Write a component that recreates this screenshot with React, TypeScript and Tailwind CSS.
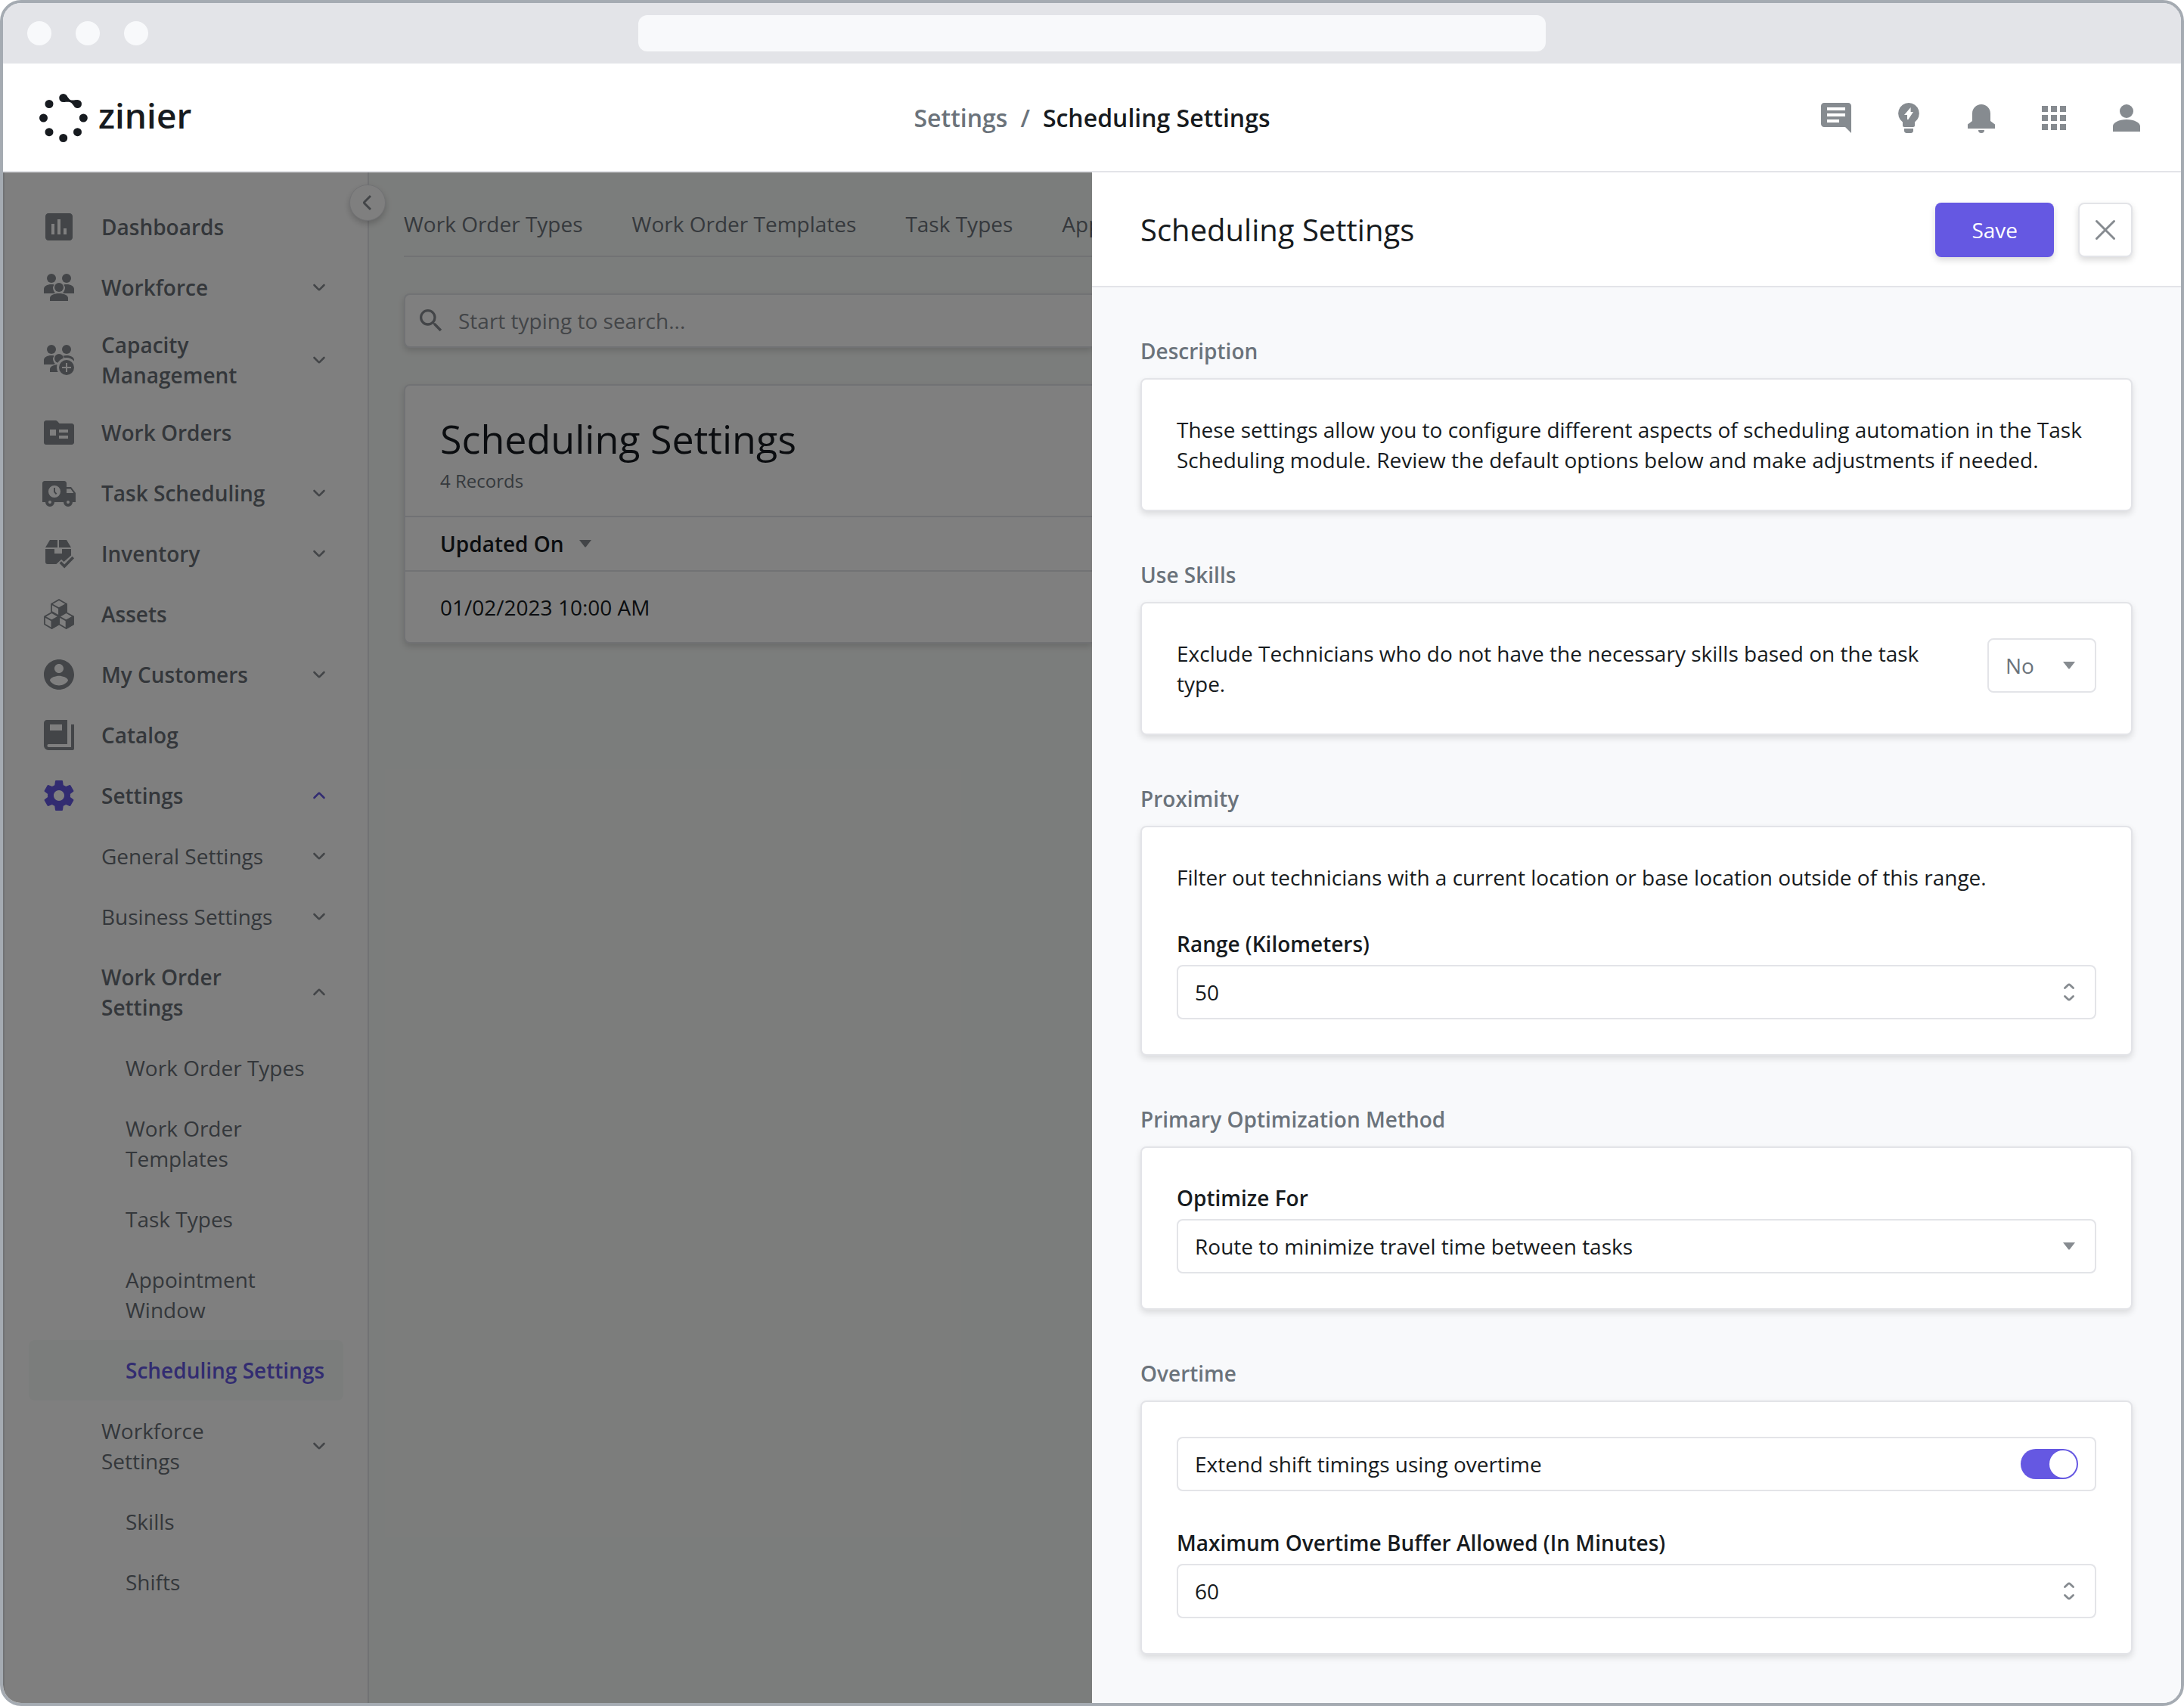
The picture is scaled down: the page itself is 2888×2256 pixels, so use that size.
import { useState } from "react";
import type { ReactNode } from "react";
import clsx from "clsx";
import { MdApps, MdInsertChart, MdSearch } from "react-icons/md";

type IconProps = { children: ReactNode; className?: string };

function Icon({ children, className = "size-12" }: IconProps) {
  return (
    <svg viewBox="0 0 24 24" fill="currentColor" aria-hidden="true" className={clsx("shrink-0", className)}>
      {children}
    </svg>
  );
}

function TeamIcon() {
  return (
    <Icon>
      <circle cx="7" cy="6" r="3" />
      <circle cx="17" cy="6" r="3" />
      <circle cx="12" cy="12" r="3" />
      <path d="M2 16v-3c0-1.700 2.200-3 5-3 .7 0 1.300.1 1.900.2A4 4 0 0 0 8 12c0 1.700.9 3.200 1.600 3.500-.4.1-.8.3-1.200.5z" />
      <path d="M22 16v-3c0-1.700-2.200-3-5-3-.7 0-1.300.1-1.900.2A4 4 0 0 1 16 12c0 1.700-.9 3.200-1.600 3.500.4.1.8.3 1.200.5z" />
      <path d="M6 21v-2c0-1.700 2.700-3 6-3s6 1.300 6 3v2z" />
    </Icon>
  );
}

function CapacityIcon() {
  return (
    <Icon>
      <mask id="capacity-cut">
        <rect width="24" height="24" fill="white" />
        <circle cx="17" cy="17" r="6.500" fill="black" />
      </mask>
      <circle cx="7" cy="5" r="3" />
      <circle cx="17" cy="5" r="3" />
      <g mask="url(#capacity-cut)">
        <circle cx="12" cy="11" r="3" />
        <path d="M2 15v-3c0-1.700 2.200-3 5-3 .7 0 1.300.1 1.900.2A4 4 0 0 0 8 11c0 1.700.9 3.200 1.600 3.500-.4.1-.8.3-1.200.5z" />
        <path d="M22 15v-3c0-1.700-2.200-3-5-3-.7 0-1.500.1-2.300.3l1.300 2z" />
        <path d="M6 20v-2c0-1.700 2.700-3 6-3v5z" />
      </g>
      <path
        fillRule="evenodd"
        d="M17 12a5 5 0 1 1 0 10 5 5 0 0 1 0-10zm-.5 2v2.500H14v1h2.500V20h1v-2.500H20v-1h-2.500V14z"
      />
    </Icon>
  );
}

function FolderIcon() {
  return (
    <Icon>
      <path
        fillRule="evenodd"
        d="M3.500 4h6.300c.4 0 .8.2 1.100.500L12.300 6h8.200c.8 0 1.500.7 1.500 1.500v11c0 .8-.7 1.500-1.500 1.500h-17A1.500 1.500 0 0 1 2 18.500v-13C2 4.700 2.700 4 3.500 4zM6 10v4h4v-4zm6 0v2h6v-2zm0 4v2h6v-2z"
      />
    </Icon>
  );
}

function TruckIcon() {
  return (
    <Icon>
      <path
        fillRule="evenodd"
        d="M2.500 4h13c.8 0 1.500.7 1.500 1.500V8h3l3 4v6h-2a3 3 0 0 1-6 0H9a3 3 0 0 1-6 0H1V5.500C1 4.700 1.700 4 2.500 4zM17 9.300V12h4.700l-2-2.700zM9 7a4 4 0 1 0 0 8 4 4 0 0 0 0-8zM6 17a1 1 0 1 0 0 2 1 1 0 0 0 0-2zm12 0a1 1 0 1 0 0 2 1 1 0 0 0 0-2z"
      />
      <path d="M9 8.500v2.700l1.300 1.500" fill="none" stroke="currentColor" strokeWidth="1" />
    </Icon>
  );
}

function InventoryIcon() {
  return (
    <Icon>
      <path d="M6 3h5v5H3zM12 3h5l3 5h-8z" />
      <path d="M3 9h6v3h5V9h6v4.200l-4.800 4.300-1.600-1.600L10.200 19H4.500A1.500 1.500 0 0 1 3 17.500z" />
      <path d="M12.900 17.700l2.700 2.800 5.800-6" fill="none" stroke="currentColor" strokeWidth="1.800" />
    </Icon>
  );
}

function AssetsIcon() {
  return (
    <Icon>
      <g stroke="currentColor" strokeWidth="0.900" strokeLinejoin="round">
        <path fill="none" d="M12 2.500l5 2.900v5L12 13.300l-5-2.900v-5zM7 5.400l5 2.800 5-2.800" />
        <path d="M12 8.200l5-2.800v5l-5 2.900z" />
        <path fill="none" d="M7.200 11l4.700 2.700v5l-4.700 2.800-4.700-2.800v-5zM2.500 13.700l4.700 2.600 4.700-2.600" />
        <path d="M7.200 16.300l4.700-2.600v5l-4.700 2.800z" />
        <path fill="none" d="M16.800 11l4.700 2.700v5l-4.700 2.800-4.700-2.800v-5zM12.100 13.700l4.700 2.600 4.700-2.600" />
        <path d="M16.800 16.300l4.700-2.600v5l-4.700 2.800z" />
      </g>
    </Icon>
  );
}

function CustomersIcon() {
  return (
    <Icon>
      <path d="M12 2C6.480 2 2 6.480 2 12s4.480 10 10 10 10-4.480 10-10S17.520 2 12 2zm0 3c1.660 0 3 1.340 3 3s-1.340 3-3 3-3-1.340-3-3 1.340-3 3-3zm0 14.200c-2.500 0-4.710-1.280-6-3.220.03-1.990 4-3.080 6-3.080 1.990 0 5.970 1.090 6 3.080-1.290 1.940-3.500 3.220-6 3.220z" />
    </Icon>
  );
}

function CatalogIcon() {
  return (
    <Icon>
      <path
        fillRule="evenodd"
        d="M4 2h13.500v16H5.200a1 1 0 0 0 0 2H20V5h2v16c0 .6-.4 1-1 1H5a3 3 0 0 1-3-3V4c0-1.100.9-2 2-2zm2 3v4h8V5z"
      />
    </Icon>
  );
}

function GearIcon() {
  return (
    <Icon className="size-12 text-[#6558e2]">
      <path d="M19.430 12.980c.04-.32.07-.64.07-.98s-.03-.66-.07-.98l2.110-1.650c.19-.15.24-.42.12-.64l-2-3.460c-.12-.22-.39-.3-.61-.22l-2.490 1c-.52-.4-1.080-.73-1.690-.98l-.38-2.650C14.460 2.180 14.250 2 14 2h-4c-.25 0-.46.18-.49.42l-.38 2.650c-.61.25-1.170.59-1.690.98l-2.490-1c-.23-.09-.49 0-.61.22l-2 3.460c-.13.22-.07.49.12.64l2.110 1.650c-.04.32-.07.65-.07.98s.03.66.07.98l-2.110 1.650c-.19.15-.24.42-.12.64l2 3.460c.12.22.39.3.61.22l2.490-1c.52.4 1.080.73 1.690.98l.38 2.650c.03.24.24.42.49.42h4c.25 0 .46-.18.49-.42l.38-2.650c.61-.25 1.170-.59 1.690-.98l2.490 1c.23.09.49 0 .61-.22l2-3.460c.12-.22.07-.49-.12-.64l-2.110-1.650zM12 15.500c-1.930 0-3.500-1.570-3.500-3.500s1.570-3.500 3.500-3.500 3.500 1.570 3.500 3.500-1.570 3.500-3.500 3.500z" />
    </Icon>
  );
}

function Chevron({ up = false, className }: { up?: boolean; className?: string }) {
  return (
    <span className="flex w-12 shrink-0 justify-center">
      <Icon className={clsx("size-6", className)}>
        <path
          d={up ? "M5.500 15l5.600-5.600q.9-.9 1.800 0L18.500 15" : "M5.500 9l5.600 5.600q.9.9 1.800 0L18.500 9"}
          fill="none"
          stroke="currentColor"
          strokeWidth="2.600"
          strokeLinecap="round"
        />
      </Icon>
    </span>
  );
}

function Caret({ className }: { className?: string }) {
  return (
    <svg viewBox="0 0 16 10" fill="currentColor" aria-hidden="true" className={clsx("h-[10px] w-4", className)}>
      <path d="M0 0h16L9 9q-1 1-2 0z" />
    </svg>
  );
}

type NavItem = {
  label: string;
  level: 1 | 2 | 3;
  icon?: ReactNode;
  expand?: "down" | "up";
  bold?: boolean;
  active?: boolean;
};

const navItems: NavItem[] = [
  { label: "Dashboards", level: 1, icon: <MdInsertChart className="size-12" /> },
  { label: "Workforce", level: 1, icon: <TeamIcon />, expand: "down" },
  { label: "Capacity Management", level: 1, icon: <CapacityIcon />, expand: "down" },
  { label: "Work Orders", level: 1, icon: <FolderIcon /> },
  { label: "Task Scheduling", level: 1, icon: <TruckIcon />, expand: "down" },
  { label: "Inventory", level: 1, icon: <InventoryIcon />, expand: "down" },
  { label: "Assets", level: 1, icon: <AssetsIcon /> },
  { label: "My Customers", level: 1, icon: <CustomersIcon />, expand: "down" },
  { label: "Catalog", level: 1, icon: <CatalogIcon /> },
  { label: "Settings", level: 1, icon: <GearIcon />, expand: "up", active: true },
  { label: "General Settings", level: 2, expand: "down" },
  { label: "Business Settings", level: 2, expand: "down" },
  { label: "Work Order Settings", level: 2, expand: "up", bold: true },
  { label: "Work Order Types", level: 3 },
  { label: "Work Order Templates", level: 3 },
  { label: "Task Types", level: 3 },
  { label: "Appointment Window", level: 3 },
  { label: "Scheduling Settings", level: 3, active: true },
  { label: "Workforce Settings", level: 2, expand: "down" },
  { label: "Skills", level: 3 },
  { label: "Shifts", level: 3 },
];

function NavRow({ item }: { item: NavItem }) {
  const rowClass = clsx(
    "flex min-h-20 w-full items-center rounded-lg pr-2 text-left",
    item.level === 1 && "py-4 pl-4 font-semibold",
    item.level === 2 && "py-5 pl-24",
    item.level === 3 && "py-5 pl-32",
    item.bold && "font-semibold",
    item.level === 3 && item.active ? "bg-[#f7faf8] font-semibold text-[#6558e2]" : "text-[#686f76]",
  );
  const content = (
    <>
      {item.icon && <span className="mr-8 text-[#868b90]">{item.icon}</span>}
      <span className={clsx("flex-1", item.expand && "pr-6")}>{item.label}</span>
      {item.expand && (
        <Chevron
          up={item.expand === "up"}
          className={item.level === 1 && item.active ? "text-[#6558e2]" : "text-[#868b90]"}
        />
      )}
    </>
  );

  return (
    <li>
      {item.expand ? (
        <button type="button" aria-expanded={item.expand === "up"} className={rowClass}>
          {content}
        </button>
      ) : (
        <a href="#" className={rowClass}>
          {content}
        </a>
      )}
    </li>
  );
}

function Sidebar() {
  return (
    <aside className="relative w-[484px] shrink-0 border-x-2 border-[#e3e4e8] bg-white px-8 pt-8">
      <nav aria-label="Main">
        <ul>
          {navItems.map((item) => (
            <NavRow key={item.label + item.level} item={item} />
          ))}
        </ul>
      </nav>
      <button
        type="button"
        aria-label="Collapse menu"
        className="absolute top-4 -right-6 flex size-12 items-center justify-center rounded-full border border-[#e3e4e8] bg-white text-[#868b90] shadow-[0_4px_8px_rgba(0,0,0,0.2)]"
      >
        <Icon className="size-6">
          <path d="M16 3l-8 8q-1 1 0 2l8 8" fill="none" stroke="currentColor" strokeWidth="3" />
        </Icon>
      </button>
    </aside>
  );
}

function Logo() {
  return (
    <a href="#" aria-label="zinier" className="flex items-center gap-[14px] text-[#171b20]">
      <svg viewBox="0 0 64 64" fill="currentColor" aria-hidden="true" className="size-16">
        <circle cx="31.700" cy="5.500" r="5.500" />
        <circle cx="50.500" cy="13.500" r="5.500" />
        <circle cx="58.300" cy="32" r="5.500" />
        <circle cx="50.500" cy="50.700" r="5.500" />
        <circle cx="31.700" cy="58.500" r="5.500" />
        <circle cx="13" cy="50.700" r="5.500" />
        <circle cx="5.500" cy="32" r="5.500" />
        <circle cx="13" cy="13.500" r="5.500" />
        <path d="M36.500 2.700C38.500 6 40.500 8.700 44 8.600c2.500-.1 4-.6 6-.7l-4.800 7.800c-1.700-3-3.200-4.500-6.200-4.900-2.500-.3-4 0-7 .1z" />
      </svg>
      <span className="pb-2 text-[46px] leading-14 font-semibold">zinier</span>
    </a>
  );
}

function Header() {
  return (
    <header className="grid h-36 grid-cols-3 items-center border-b-2 border-[#e3e4e8] bg-white px-12 pt-[2px]">
      <Logo />
      <nav
        aria-label="Breadcrumb"
        className="flex justify-center gap-[17px] text-[32px] leading-10 font-semibold whitespace-nowrap"
      >
        <a href="#" className="text-[#6b737b]">
          Settings
        </a>
        <span className="text-[#6b737b]">/</span>
        <span className="text-[#171b20]">Scheduling Settings</span>
      </nav>
      <div className="flex justify-end gap-12 text-[#868b90]">
        <button type="button" aria-label="Messages">
          <Icon>
            <path
              fillRule="evenodd"
              d="M4 2h16c1.100 0 2 .9 2 2v18l-4-4H4c-1.100 0-2-.9-2-2V4c0-1.100.9-2 2-2zm2 3v2h12V5zm0 4v2h12V9zm0 4v2h8v-2z"
            />
          </Icon>
        </button>
        <button type="button" aria-label="Tips">
          <Icon>
            <path
              fillRule="evenodd"
              d="M12 2a7 7 0 0 1 4 12.700V17c0 .6-.4 1-1 1H9c-.6 0-1-.4-1-1v-2.300A7 7 0 0 1 12 2zm1.300 3L9 10h2v3h.7L15 8h-1.700z"
            />
            <path d="M9 19h6v1.500c0 .8-.7 1.500-1.500 1.500h-3c-.8 0-1.500-.7-1.500-1.500z" />
          </Icon>
        </button>
        <button type="button" aria-label="Notifications">
          <Icon>
            <path d="M12 3c3.300 0 6 2.700 6 6v5l3 2.200V19H3v-2.800L6 14V9c0-3.300 2.700-6 6-6zM10 20h4a2 2 0 0 1-4 0z" />
          </Icon>
        </button>
        <button type="button" aria-label="Apps">
          <MdApps className="size-12" />
        </button>
        <button type="button" aria-label="Account">
          <Icon>
            <circle cx="12" cy="7.500" r="4.500" />
            <path d="M3 21v-3.500C3 15 7 13 12 13s9 2 9 4.500V21z" />
          </Icon>
        </button>
      </div>
    </header>
  );
}

const tabs = ["Work Order Types", "Work Order Templates", "Task Types", "Appointment Window"];

function Records() {
  return (
    <main className="min-w-0 flex-1 bg-[#f7faf8] pl-[46px]">
      <nav
        aria-label="Sections"
        className="flex gap-[65px] overflow-hidden border-b-2 border-[#e3e4e8] pt-12 pb-[22px] whitespace-nowrap text-[#6c737a]"
      >
        {tabs.map((tab) => (
          <a key={tab} href="#" className="shrink-0 last:shrink last:overflow-hidden">
            {tab}
          </a>
        ))}
      </nav>

      <div className="mt-12 flex h-[72px] items-center gap-4 rounded-l-lg border-2 border-r-0 border-[#e3e4e8] bg-white px-[14px] text-[#868b90] shadow-[0_4px_8px_rgba(0,0,0,0.15)]">
        <MdSearch className="size-10" />
        <input
          type="search"
          aria-label="Search records"
          placeholder="Start typing to search..."
          className="flex-1 outline-none placeholder:text-[#868b90]"
        />
      </div>

      <section className="mt-12 rounded-l-lg border-2 border-r-0 border-[#e3e4e8] bg-white shadow-[0_4px_8px_rgba(0,0,0,0.15)]">
        <div className="px-[46px] pt-[38px] pb-[26px]">
          <h1 className="text-[52px] leading-16 text-[#171b20]">Scheduling Settings</h1>
          <p className="mt-1 text-2xl leading-10 text-[#6b737b]">4 Records</p>
        </div>
        <table className="w-full text-left text-[#171b20]">
          <thead>
            <tr className="h-[72px] border-y-2 border-[#e3e4e8]">
              <th scope="col" className="px-[46px] font-semibold">
                <button type="button" className="flex items-center gap-5">
                  Updated On
                  <Caret className="text-[#868b90]" />
                </button>
              </th>
            </tr>
          </thead>
          <tbody>
            <tr className="h-[94px]">
              <td className="px-[46px]">01/02/2023 10:00 AM</td>
            </tr>
          </tbody>
        </table>
      </section>
    </main>
  );
}

function Section({ title, children }: { title: string; children: ReactNode }) {
  return (
    <section>
      <h3 className="font-semibold text-[#6b737b]">{title}</h3>
      <div className="mt-4 rounded-lg border-2 border-[#e3e4e8] bg-white p-[46px] shadow-[0_4px_8px_rgba(0,0,0,0.12)]">
        {children}
      </div>
    </section>
  );
}

const fieldClass = "h-[72px] w-full appearance-none rounded-lg border-2 border-[#e3e4e8] bg-white px-[22px] outline-none";

type NumberFieldProps = { id: string; label: string; value: string; onChange: (value: string) => void };

function NumberField({ id, label, value, onChange }: NumberFieldProps) {
  return (
    <div className="mt-12">
      <label htmlFor={id} className="block font-semibold">
        {label}
      </label>
      <div className="relative mt-2">
        <input
          id={id}
          type="number"
          value={value}
          onChange={(e) => onChange(e.target.value)}
          className={clsx(fieldClass, "[appearance:textfield] [&::-webkit-inner-spin-button]:appearance-none")}
        />
        <svg
          viewBox="0 0 24 24"
          fill="none"
          stroke="currentColor"
          strokeWidth="2.800"
          strokeLinecap="round"
          aria-hidden="true"
          className="pointer-events-none absolute top-6 right-6 size-6 text-[#868b90]"
        >
          <path d="M6.500 6.500l4.200-4q1.300-1.200 2.600 0l4.200 4M6.500 17.500l4.200 4q1.300 1.200 2.600 0l4.200-4" />
        </svg>
      </div>
    </div>
  );
}

function SettingsDrawer() {
  const [skills, setSkills] = useState("No");
  const [range, setRange] = useState("50");
  const [method, setMethod] = useState("travel");
  const [overtime, setOvertime] = useState(true);
  const [buffer, setBuffer] = useState("60");

  return (
    <div role="dialog" aria-labelledby="drawer-title" className="bg-[#f8f9fb] text-[#171b20]">
      <div className="flex items-center gap-8 border-b-2 border-[#e3e4e8] bg-white px-16 pt-10 pb-[38px]">
        <h2 id="drawer-title" className="flex-1 text-[40px] leading-14">
          Scheduling Settings
        </h2>
        <button
          type="button"
          className="h-[72px] rounded-lg bg-[#6558e2] px-12 text-white shadow-[0_4px_8px_rgba(0,0,0,0.15)]"
        >
          Save
        </button>
        <button
          type="button"
          aria-label="Close"
          className="flex size-[72px] items-center justify-center rounded-lg border-2 border-[#e3e4e8] bg-white text-[#868b90] shadow-[0_4px_8px_rgba(0,0,0,0.15)]"
        >
          <svg
            viewBox="0 0 28 28"
            stroke="currentColor"
            strokeWidth="3"
            strokeLinecap="round"
            aria-hidden="true"
            className="size-7"
          >
            <path d="M2.500 2.500l23 23M25.500 2.500l-23 23" />
          </svg>
        </button>
      </div>

      <div className="flex flex-col gap-16 p-16">
        <Section title="Description">
          <p>
            These settings allow you to configure different aspects of scheduling automation in the Task Scheduling
            module. Review the default options below and make adjustments if needed.
          </p>
        </Section>

        <Section title="Use Skills">
          <div className="flex items-start justify-between gap-12">
            <label htmlFor="skills">
              Exclude Technicians who do not have the necessary skills based on the task type.
            </label>
            <div className="relative w-36 shrink-0">
              <select
                id="skills"
                value={skills}
                onChange={(e) => setSkills(e.target.value)}
                className={clsx(fieldClass, "text-[#6b737b]")}
              >
                <option>No</option>
                <option>Yes</option>
              </select>
              <Caret className="pointer-events-none absolute top-[31px] right-7 text-[#868b90]" />
            </div>
          </div>
        </Section>

        <Section title="Proximity">
          <p>Filter out technicians with a current location or base location outside of this range.</p>
          <NumberField id="range" label="Range (Kilometers)" value={range} onChange={setRange} />
        </Section>

        <Section title="Primary Optimization Method">
          <label htmlFor="method" className="block font-semibold">
            Optimize For
          </label>
          <div className="relative mt-2">
            <select id="method" value={method} onChange={(e) => setMethod(e.target.value)} className={fieldClass}>
              <option value="travel">Route to minimize travel time between tasks</option>
            </select>
            <Caret className="pointer-events-none absolute top-[31px] right-7 text-[#868b90]" />
          </div>
        </Section>

        <Section title="Overtime">
          <div className="flex h-[72px] items-center justify-between rounded-lg border-2 border-[#e3e4e8] px-[22px]">
            <label htmlFor="overtime">Extend shift timings using overtime</label>
            <input
              id="overtime"
              type="checkbox"
              role="switch"
              checked={overtime}
              onChange={(e) => setOvertime(e.target.checked)}
              className="flex h-10 w-[76px] appearance-none items-center rounded-full bg-[#a5abb2] p-[2px] before:size-9 before:rounded-full before:bg-white before:content-[''] checked:justify-end checked:bg-[#6558e2]"
            />
          </div>
          <NumberField
            id="buffer"
            label="Maximum Overtime Buffer Allowed (In Minutes)"
            value={buffer}
            onChange={setBuffer}
          />
        </Section>
      </div>
    </div>
  );
}

export default function App() {
  return (
    <div className="flex min-h-screen flex-col overflow-hidden rounded-[28px] border-4 border-[#a5abb2] bg-white font-['Open_Sans',sans-serif] text-[28px] leading-10">
      {/* Browser chrome */}
      <div className="grid h-20 grid-cols-[1fr_1200px_1fr] items-center bg-[#e3e4e8] px-8">
        <div className="flex gap-8">
          <span className="size-8 rounded-full bg-[#f8f9fb]" />
          <span className="size-8 rounded-full bg-[#f8f9fb]" />
          <span className="size-8 rounded-full bg-[#f8f9fb]" />
        </div>
        <input type="text" aria-label="Address" className="h-12 rounded-xl bg-[#f8f9fb] outline-none" />
      </div>

      <Header />

      <div className="grid flex-1 grid-cols-2">
        <div className="relative flex min-w-0 overflow-hidden">
          <Sidebar />
          <Records />
          {/* Dimmed while the drawer is open */}
          <div className="absolute inset-0 bg-black/50" />
        </div>
        <SettingsDrawer />
      </div>
    </div>
  );
}
